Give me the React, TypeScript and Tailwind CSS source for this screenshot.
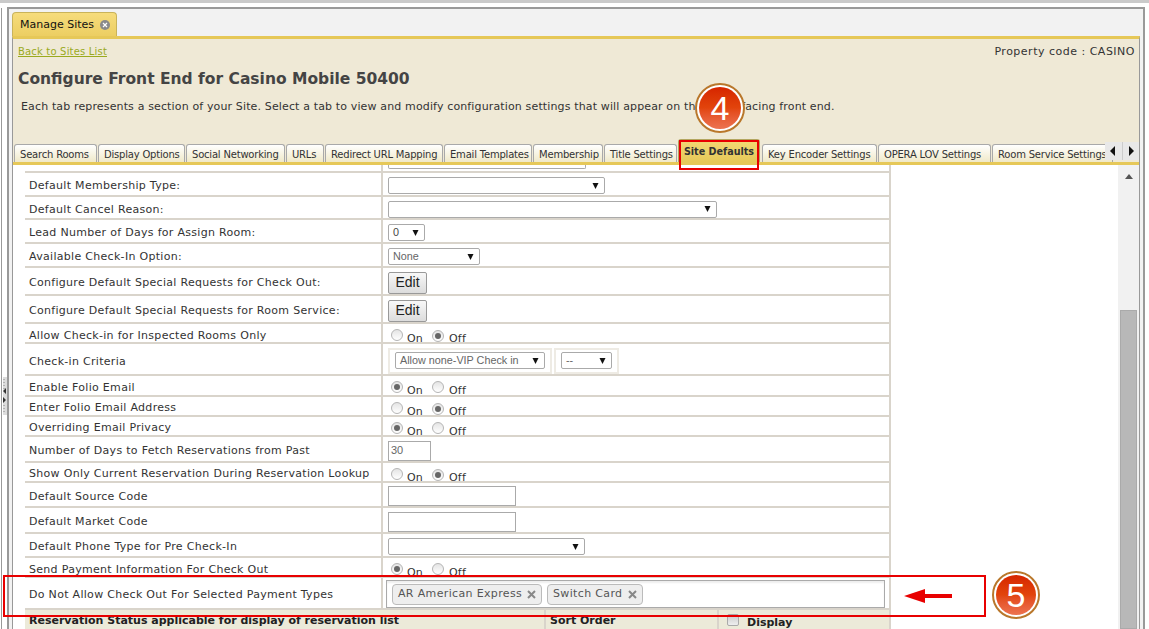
const sans = "font-['DejaVu_Sans',sans-serif]";

const tabs: [string, number][] = [
  ["Search Rooms", 84],
  ["Display Options", 88],
  ["Social Networking", 100],
  ["URLs", 39],
  ["Redirect URL Mapping", 119],
  ["Email Templates", 89],
  ["Membership", 71],
  ["Title Settings", 74],
];
const tabs2: [string, number][] = [
  ["Key Encoder Settings", 116],
  ["OPERA LOV Settings", 114],
  ["Room Service Settings", 122],
];

function Tab({ label, w }: { label: string; w: number }) {
  return (
    <div
      style={{ width: w }}
      className="mr-px h-[18px] shrink-0 overflow-hidden whitespace-nowrap rounded-t-[3px] border border-b-0 border-[#a9a9a9] bg-gradient-to-b from-white to-[#f0e9c8] pl-[5px] pt-[3px] text-[10px] leading-[13px] tracking-[-0.2px] text-[#333]"
    >
      {label}
    </div>
  );
}

function Select({ w, text, gray }: { w: number; text?: string; gray?: boolean }) {
  return (
    <div
      style={{ width: w }}
      className="flex h-[17px] items-center justify-between rounded-[2px] border border-[#aaa] bg-white pl-[4px] pr-[5px]"
    >
      <span className={"font-['Liberation_Sans',sans-serif] text-[10.8px] " + (gray ? "text-[#666]" : "text-[#444]")}>{text}</span>
      <svg width="7" height="7" viewBox="0 0 7 7" className="mb-px">
        <path d="M0.5 1 L6.5 1 L3.5 7 Z" fill="#111" />
      </svg>
    </div>
  );
}

function Radio({ on }: { on?: boolean }) {
  return (
    <span className="inline-flex h-[12px] w-[12px] items-center justify-center rounded-full border border-[#b5b5b5] bg-gradient-to-b from-[#e4e4e4] to-white">
      {on && <span className="h-[6px] w-[6px] rounded-full bg-[#666]" />}
    </span>
  );
}

function OnOff({ value }: { value: "on" | "off" }) {
  return (
    <div className="mt-[5px] flex items-start pl-[3px] text-[11px] leading-[14px] text-[#333]">
      <Radio on={value === "on"} />
      <span className="ml-[4px] mt-[3px] w-[16px] tracking-[0.2px]">On</span>
      <span className="ml-[9px]">
        <Radio on={value === "off"} />
      </span>
      <span className="ml-[5px] mt-[3px] tracking-[0.2px]">Off</span>
    </div>
  );
}

function TextBox({ w, h, text }: { w: number; h: number; text?: string }) {
  return (
    <div
      style={{ width: w, height: h }}
      className="border border-[#aaa] bg-white pl-[2px] font-['Liberation_Sans',sans-serif] text-[11px] leading-[17px] text-[#666]"
    >
      {text}
    </div>
  );
}

function EditButton() {
  return (
    <div className="flex h-[22px] w-[39px] items-center justify-center rounded-[2px] border border-[#999] bg-gradient-to-b from-[#f8f8f8] to-[#dcdcdc] font-['Liberation_Sans',sans-serif] text-[14px] text-[#222]">
      Edit
    </div>
  );
}

function Chip({ text, w }: { text: string; w: number }) {
  return (
    <div
      style={{ width: w }}
      className="flex h-[21px] shrink-0 items-center justify-between rounded-[4px] border border-[#bbb] bg-[#eee] pl-[5px] pr-[5px] text-[11px] tracking-[0.35px] text-[#555]"
    >
      <span>{text}</span>
      <svg width="9" height="9" viewBox="0 0 9 9">
        <path d="M1 1 L8 8 M8 1 L1 8" stroke="#888" strokeWidth="2" />
      </svg>
    </div>
  );
}

function Row({
  h,
  label,
  children,
  top = 5,
}: {
  h: number;
  label?: string;
  children?: React.ReactNode;
  top?: number;
}) {
  return (
    <div style={{ height: h }} className="flex shrink-0 border-b-2 border-[#d9d4cb]">
      <div className="flex w-[356px] items-center pl-[4px] text-[11px] tracking-[0.3px] text-[#333]" style={{ paddingTop: top }}>
        {label}
      </div>
      <div className="flex min-w-0 flex-1 items-center border-l-2 border-[#d9d4cb] pl-[5px] pt-[3px]">{children}</div>
    </div>
  );
}

function Badge({ n, className }: { n: string; className: string }) {
  return (
    <div
      className={
        "absolute flex items-center justify-center rounded-full border-[2px] border-[#b9772b] bg-white p-[2px] " +
        className
      }
    >
      <div className="flex h-full w-full items-center justify-center rounded-full bg-gradient-to-b from-[#d62400] via-[#e2440c] to-[#ec7350] font-['Liberation_Sans',sans-serif] text-[34px] leading-none text-white">
        {n}
      </div>
    </div>
  );
}

export default function App() {
  return (
    <div className={"relative flex h-[629px] w-[1149px] flex-col overflow-hidden bg-white " + sans}>
      <div className="h-[3px] shrink-0 bg-[#cacaca]" />
      <div className="flex min-h-0 flex-1 pt-[4px]">
        {/* left gutter */}
        <div className="relative w-[7px] shrink-0">
          <div className="absolute left-[1px] top-[1px] h-full w-px bg-[#999]" />
          <div className="absolute left-[3px] top-[370px] flex h-[38px] w-[4px] items-center justify-center bg-[#dcdcdc]">
            <svg width="4" height="38" viewBox="0 0 4 38">
              <path d="M1 2 V3 M1 5 V6 M1 8 V9 M1 11 V12 M1 28 V29 M1 31 V32 M1 34 V35" stroke="#888" strokeWidth="1" />
              <path d="M3 11 L0 14 L3 17 Z M0 20 L3 23 L0 26 Z" fill="#333" />
            </svg>
          </div>
        </div>
        {/* main frame */}
        <div className="flex w-[1138px] shrink-0 flex-col border-2 border-b-0 border-[#999] bg-[#f2f2f2] pl-[3px] pr-[3px]">
          <div className="flex h-[27px] shrink-0 items-end">
            <div className="flex h-[24px] w-[105px] items-center rounded-t-[4px] border border-b-0 border-[#c9b35a] bg-gradient-to-b from-[#f6dc7c] to-[#ecce62] pl-[7px] pt-[1px] text-[11px] text-[#111]">
              Manage Sites
              <span className="ml-[6px] flex h-[10px] w-[10px] items-center justify-center rounded-full bg-[#8a8a8a]">
                <svg width="6" height="6" viewBox="0 0 6 6">
                  <path d="M1 1 L5 5 M5 1 L1 5" stroke="#fff" strokeWidth="1.2" />
                </svg>
              </span>
            </div>
          </div>
          <div className="flex min-h-0 flex-1 flex-col border-l border-r border-t-[3px] border-[#999] border-t-[#e6c858]">
            {/* header */}
            <div className="flex h-[123px] shrink-0 flex-col bg-[#efe9d6]">
              <div className="flex justify-between pl-[5px] pr-[4px] pt-[6px]">
                <span className="text-[10px] leading-[13px] tracking-[0.18px] text-[#9aaa1e] underline">Back to Sites List</span>
                <span className="text-[11px] leading-[13px] tracking-[0.5px] text-[#333]">Property code : CASINO</span>
              </div>
              <h1 className="pl-[5px] pt-[10px] text-[15.5px] font-bold leading-[22px] text-[#444]">
                Configure Front End for Casino Mobile 50400
              </h1>
              <p className="pl-[8px] pt-[10px] text-[11px] leading-[14px] tracking-[0.14px] text-[#333]">
                Each tab represents a section of your Site. Select a tab to view and modify configuration settings that will appear on the guest facing front end.
              </p>
              <div className="relative mt-auto flex items-end overflow-visible pl-[1px]">
                {tabs.map(([l, w]) => (
                  <Tab key={l} label={l} w={w - 1} />
                ))}
                <div className="mr-[2px] flex h-[23px] w-[82px] shrink-0 items-start justify-center rounded-t-[3px] border border-b-0 border-[#b3a660] bg-gradient-to-b from-[#f3d974] to-[#e6c858] pt-[5px] text-[9.6px] font-bold leading-[13px] text-[#333]">
                  Site Defaults
                </div>
                <div className="flex w-[352px] shrink-0 overflow-hidden">
                  {tabs2.map(([l, w]) => (
                    <Tab key={l} label={l} w={w - 1} />
                  ))}
                </div>
                <div className="absolute bottom-[2px] right-0 flex h-[18px] w-[34px] gap-[1px] bg-[#ccc]">
                  <div className="flex flex-1 items-center justify-center bg-[#e8e8e8]">
                    <svg width="6" height="10" viewBox="0 0 6 10"><path d="M5 0 V10 L0 5 Z" fill="#111" /></svg>
                  </div>
                  <div className="flex flex-1 items-center justify-center bg-[#e8e8e8]">
                    <svg width="6" height="10" viewBox="0 0 6 10"><path d="M1 0 V10 L6 5 Z" fill="#111" /></svg>
                  </div>
                </div>
              </div>
            </div>
            <div className="h-[3px] shrink-0 bg-[#e6c858]" />
            {/* body */}
            <div className="flex min-h-0 flex-1 overflow-hidden bg-white">
              <div className="flex min-w-0 flex-1 flex-col pl-[12px]">
                <div className="flex w-[866px] flex-col border-r-2 border-[#d9d4cb]">
                  <div className="flex h-[8px] shrink-0 border-b-2 border-[#d9d4cb]">
                    <div className="w-[356px]" />
                    <div className="flex-1 border-l-2 border-[#d9d4cb] pl-[5px]">
                      <div className="h-[4px] w-[198px] rounded-b-[2px] border border-t-0 border-[#aaa]" />
                    </div>
                  </div>
                  <Row h={24} label="Default Membership Type:" top={4}><Select w={217} /></Row>
                  <Row h={23} label="Default Cancel Reason:"><Select w={329} /></Row>
                  <Row h={24} label="Lead Number of Days for Assign Room:"><Select w={37} text="0" /></Row>
                  <Row h={24} label="Available Check-In Option:"><Select w={92} text="None" gray /></Row>
                  <Row h={28} label="Configure Default Special Requests for Check Out:"><EditButton /></Row>
                  <Row h={28} label="Configure Default Special Requests for Room Service:"><EditButton /></Row>
                  <Row h={20} label="Allow Check-in for Inspected Rooms Only" top={6}><OnOff value="off" /></Row>
                  <Row h={32} label="Check-in Criteria" top={6}>
                    <div className="flex h-[26px] w-[164px] items-center border-2 border-[#eeebe4] pl-[5px]">
                      <Select w={150} text="Allow none-VIP Check in" gray />
                    </div>
                    <div className="ml-[2px] flex h-[26px] w-[65px] items-center border-2 border-[#eeebe4] pl-[5px]">
                      <Select w={51} text="--" gray />
                    </div>
                  </Row>
                  <Row h={21} label="Enable Folio Email" top={5}><OnOff value="on" /></Row>
                  <Row h={20} label="Enter Folio Email Address" top={5}><OnOff value="off" /></Row>
                  <Row h={20} label="Overriding Email Privacy" top={5}><OnOff value="on" /></Row>
                  <Row h={26} label="Number of Days to Fetch Reservations from Past" top={4}><TextBox w={43} h={20} text="30" /></Row>
                  <Row h={20} label="Show Only Current Reservation During Reservation Lookup" top={5}><OnOff value="off" /></Row>
                  <Row h={25} label="Default Source Code"><TextBox w={128} h={20} /></Row>
                  <Row h={26} label="Default Market Code"><TextBox w={128} h={20} /></Row>
                  <Row h={24} label="Default Phone Type for Pre Check-In"><Select w={197} /></Row>
                  <Row h={20} label="Send Payment Information For Check Out" top={6}><OnOff value="on" /></Row>
                  <div className="flex h-[32px] shrink-0 border-b-2 border-[#d9d4cb]">
                    <div className="flex w-[356px] items-center pl-[4px] pt-[4px] text-[11px] tracking-[0.3px] text-[#333]">
                      Do Not Allow Check Out For Selected Payment Types
                    </div>
                    <div className="flex flex-1 items-end border-l-2 border-[#d9d4cb] pl-[3px] pr-[4px]">
                      <div className="flex h-[28px] w-full items-center gap-[5px] border border-[#aaa] pl-[5px] shadow-[inset_0_2px_2px_#eee]">
                        <Chip text="AR American Express" w={150} />
                        <Chip text="Switch Card" w={96} />
                      </div>
                    </div>
                  </div>
                  <div className="flex h-[30px] shrink-0 bg-[#ecead9] text-[11px] font-bold text-[#222]">
                    <div className="w-[519px] pl-[4px] pt-[4px] leading-[14px]">Reservation Status applicable for display of reservation list</div>
                    <div className="w-[173px] border-l-2 border-[#d9d4cb] pl-[4px] pt-[4px] leading-[14px]">Sort Order</div>
                    <div className="flex flex-1 border-l-2 border-[#d9d4cb] pl-[8px] pt-[4px]">
                      <span className="h-[12px] w-[12px] rounded-[2px] border border-[#aaa] bg-gradient-to-b from-[#ccc] to-[#eee]" />
                      <span className="ml-[8px] mt-[2px] leading-[14px]">Display</span>
                    </div>
                  </div>
                </div>
              </div>
              {/* scrollbar */}
              <div className="flex w-[21px] shrink-0 flex-col items-center bg-[#f1f1f1]">
                <svg width="8" height="5" viewBox="0 0 8 5" className="mt-[9px]"><path d="M4 0 L8 5 H0 Z" fill="#555" /></svg>
                <div className="mt-[131px] w-[17px] flex-1 border border-[#aaa] bg-[#b8b8b8]" />
              </div>
            </div>
          </div>
        </div>
      </div>

      {/* annotations */}
      <Badge n="4" className="left-[695px] top-[83px] h-[50px] w-[50px]" />
      <div className="pointer-events-none absolute left-[679px] top-[140px] h-[30px] w-[80px] border-2 border-[#e80000]" />
      <div className="pointer-events-none absolute left-[3px] top-[575px] h-[42px] w-[983px] border-2 border-[#e80000]" />
      <svg className="absolute left-[904px] top-[588px]" width="48" height="16" viewBox="0 0 48 16">
        <path d="M0 8 L21 1 V6 H48 V10 H21 V15 Z" fill="#e80000" />
      </svg>
      <Badge n="5" className="left-[992px] top-[571px] h-[48px] w-[48px]" />
    </div>
  );
}
